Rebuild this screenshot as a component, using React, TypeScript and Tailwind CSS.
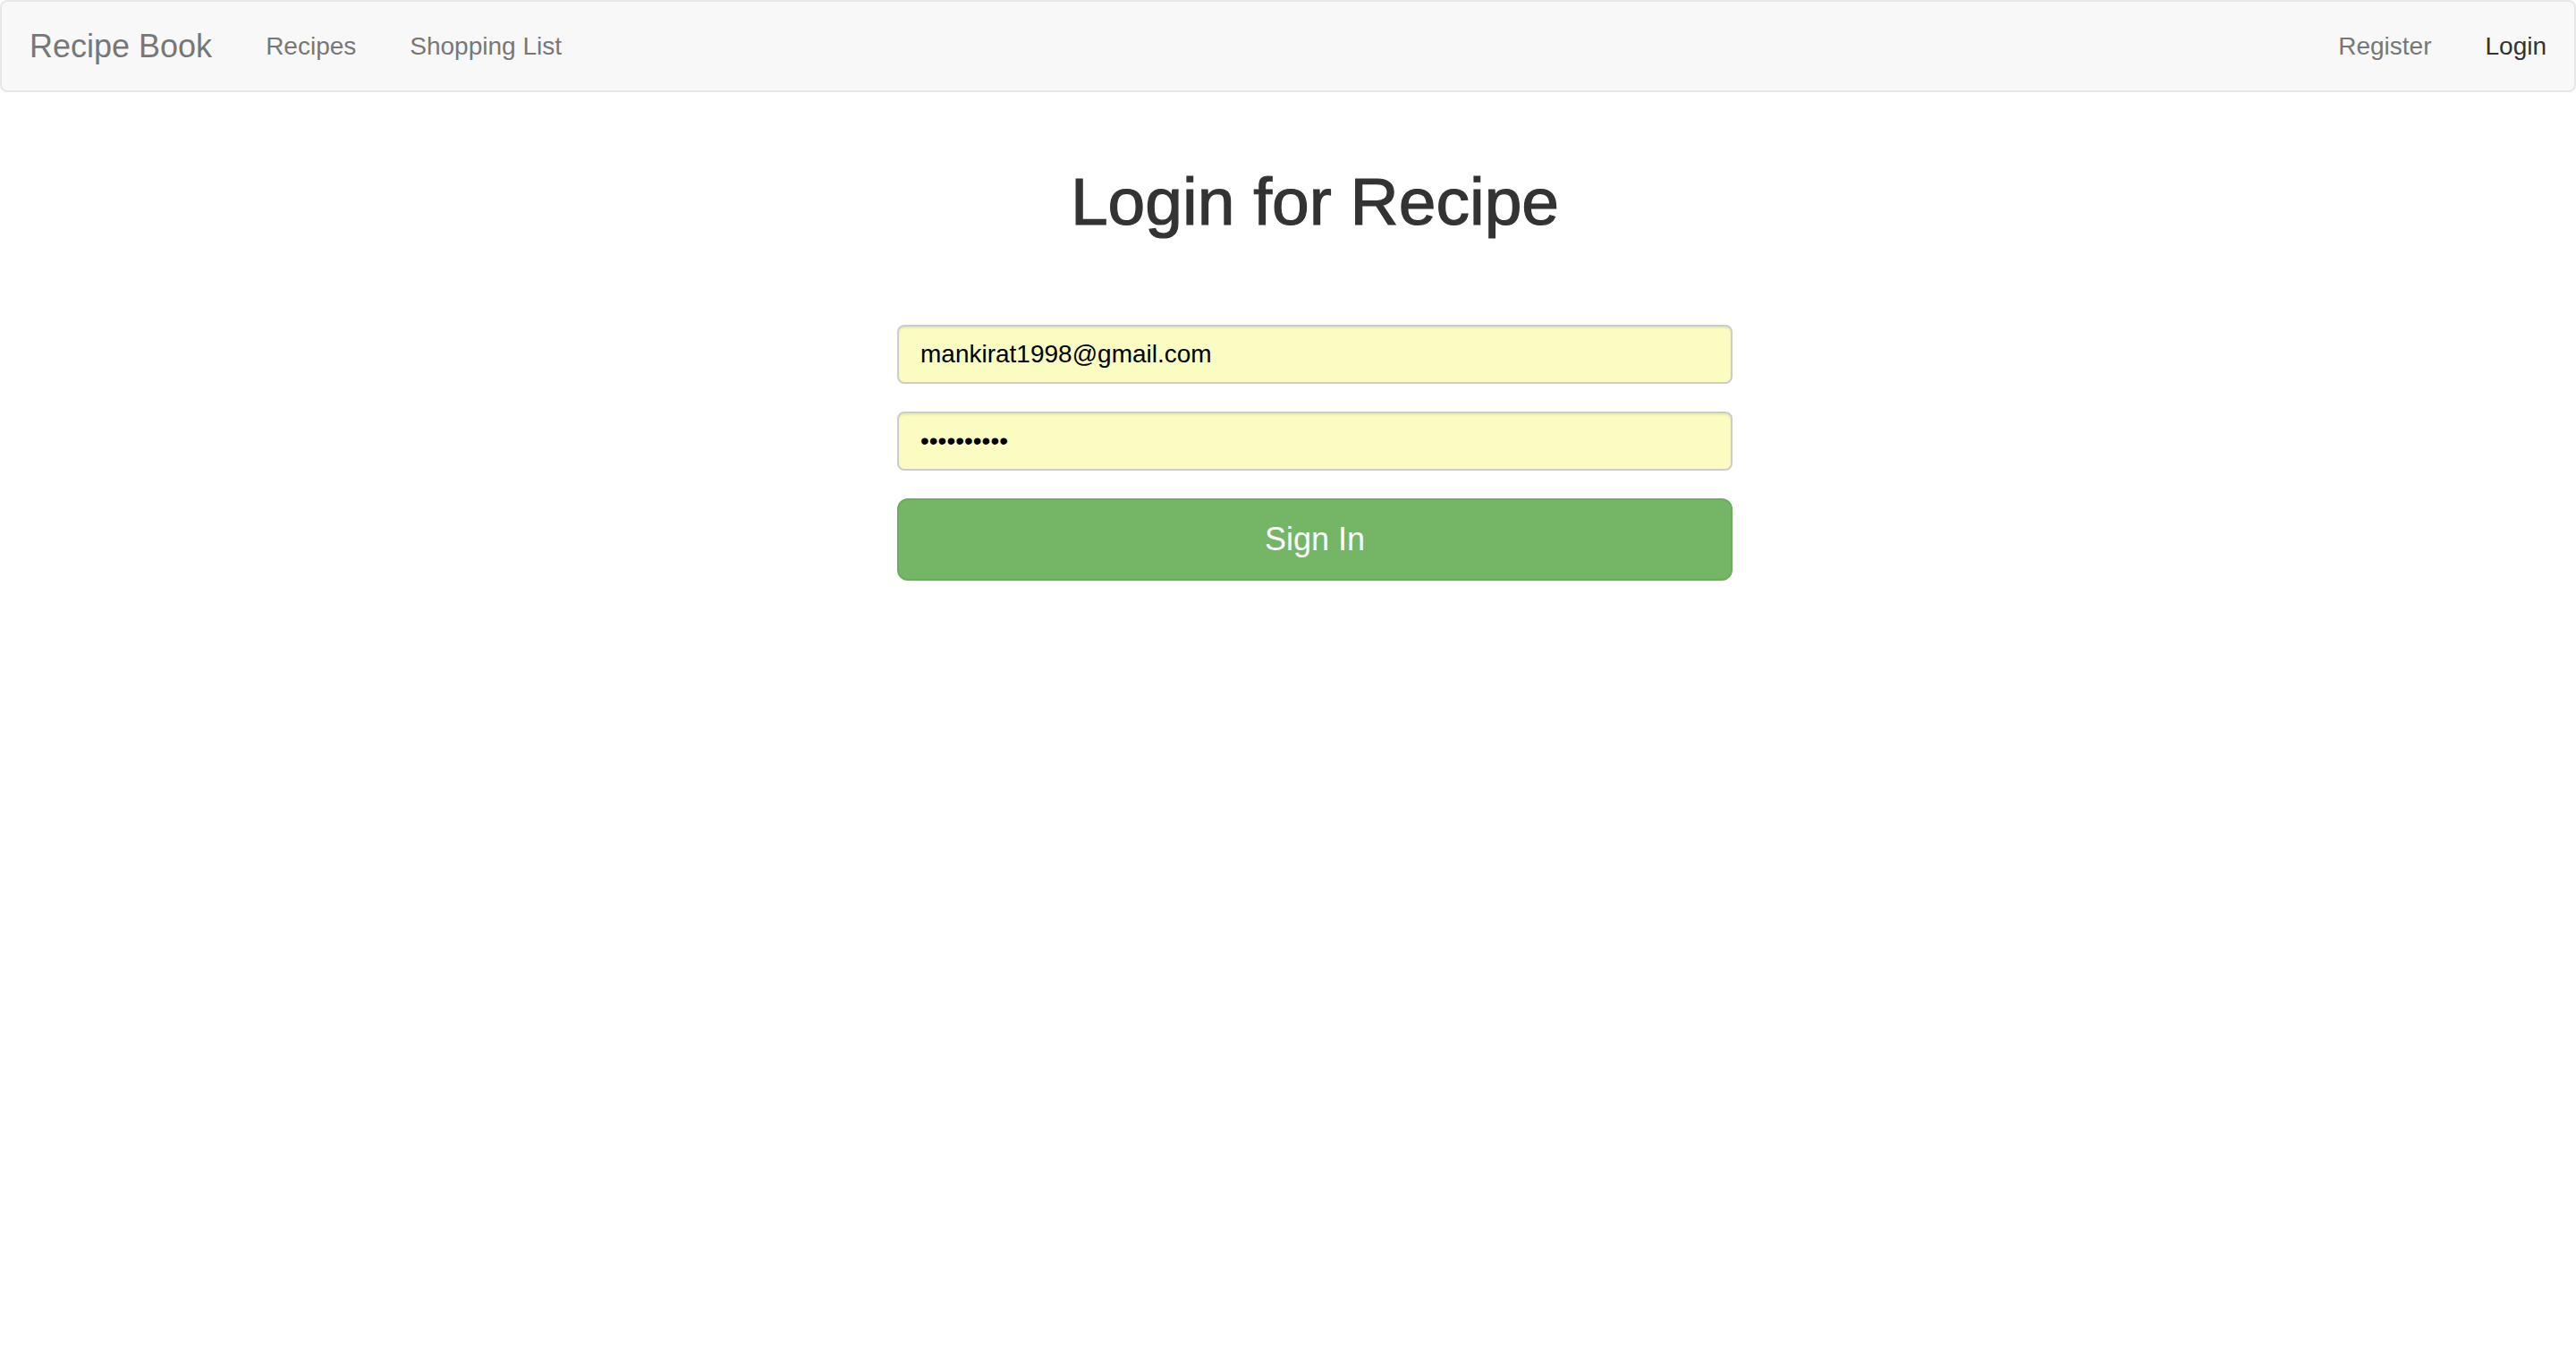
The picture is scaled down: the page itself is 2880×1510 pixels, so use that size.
import React from 'react';

const font = { fontFamily: '"Liberation Sans", Arial, Helvetica, sans-serif' };

function Navbar() {
  const leftLinks = [
    { href: '#recipes', label: 'Recipes' },
    { href: '#shopping-list', label: 'Shopping List' },
  ];

  return (
    <nav className="h-[103px] bg-[#f8f8f8] border-2 border-[#e7e7e7] rounded-[8px] flex items-center justify-between">
      <div className="flex items-center">
        <a href="#" className="pl-[31px] pr-[30px] text-[36px] leading-none text-[#777777]">
          Recipe Book
        </a>
        {leftLinks.map((link) => (
          <a key={link.href} href={link.href} className="px-[30px] text-[28px] leading-none text-[#777777]">
            {link.label}
          </a>
        ))}
      </div>
      <div className="flex items-center pr-px">
        <a href="#register" className="px-[30px] text-[28px] leading-none text-[#777777]">
          Register
        </a>
        <a href="#login" className="px-[30px] text-[28px] leading-none text-[#333333]">
          Login
        </a>
      </div>
    </nav>
  );
}

function LoginForm() {
  return (
    <div className="flex justify-center pl-[60px]">
      <div className="w-[934px] flex flex-col">
        <h1 className="mt-[81px] text-center text-[75px] leading-[1.1] font-normal text-[#333333] [-webkit-text-stroke:1.2px_#333333]">
          Login for Recipe
        </h1>
        <form className="mt-[96px] flex flex-col gap-[32px]" onSubmit={(e) => e.preventDefault()}>
          <input
            type="email"
            readOnly
            defaultValue="mankirat1998@gmail.com"
            className="h-[66px] w-full px-[24px] bg-[#fafcc2] border-2 border-[#cccccc] rounded-[8px] shadow-[inset_0_2px_2px_rgba(0,0,0,0.075)] text-[28px] text-black outline-none"
            style={font}
          />
          <input
            type="password"
            readOnly
            defaultValue="0123456789"
            className="h-[66px] w-full px-[24px] bg-[#fafcc2] border-2 border-[#cccccc] rounded-[8px] shadow-[inset_0_2px_2px_rgba(0,0,0,0.075)] text-[28px] text-black outline-none -mt-[1px]"
            style={font}
          />
          <button
            type="submit"
            className="h-[92px] w-full bg-[#74b566] border-2 border-[#6aad5c] rounded-[12px] text-white text-[36px] leading-none -mt-[1px]"
            style={font}
          >
            Sign In
          </button>
        </form>
      </div>
    </div>
  );
}

export default function App() {
  return (
    <div className="min-h-[1510px] bg-white" style={font}>
      <Navbar />
      <LoginForm />
    </div>
  );
}
